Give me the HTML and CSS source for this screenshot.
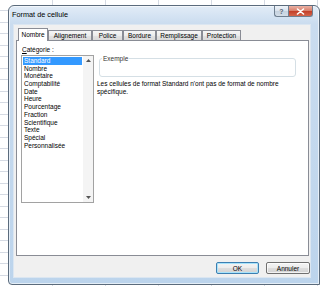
FILE: index.html
```html
<!DOCTYPE html>
<html lang="fr">
<head>
    <meta charset="UTF-8">
    <title>Format de cellule</title>
    <link rel="stylesheet" href="styles.css">
</head>
<body>
    <div class="window">
        <div class="titlebar">
            <span class="title">Format de cellule</span>
            <div class="caption">
                <span class="cap-btn help">?</span>
                <span class="cap-btn close">
                    <svg width="9" height="7" viewBox="0 0 9 7"><path d="M1.5 1 L7.5 6 M7.5 1 L1.5 6" stroke="#fff" stroke-width="1.6" stroke-linecap="round"/></svg>
                </span>
            </div>
        </div>

        <div class="client">
            <div class="tabs">
                <span class="tab active">Nombre</span>
                <span class="tab w-align">Alignement</span>
                <span class="tab w-police">Police</span>
                <span class="tab w-bordure">Bordure</span>
                <span class="tab w-rempl">Remplissage</span>
                <span class="tab w-prot">Protection</span>
            </div>

            <div class="panel">
                <div class="category">
                    <div class="label"><u>C</u>atégorie :</div>
                    <div class="listbox">
                        <ul class="items">
                            <li class="selected">Standard</li>
                            <li>Nombre</li>
                            <li>Monétaire</li>
                            <li>Comptabilité</li>
                            <li>Date</li>
                            <li>Heure</li>
                            <li>Pourcentage</li>
                            <li>Fraction</li>
                            <li>Scientifique</li>
                            <li>Texte</li>
                            <li>Spécial</li>
                            <li>Personnalisée</li>
                        </ul>
                        <div class="scrollbar">
                            <span class="arrow"><svg width="5" height="3" viewBox="0 0 5 3"><path d="M0 3 L2.5 0 L5 3 Z" fill="#555"/></svg></span>
                            <span class="arrow"><svg width="5" height="3" viewBox="0 0 5 3"><path d="M0 0 L2.5 3 L5 0 Z" fill="#555"/></svg></span>
                        </div>
                    </div>
                </div>

                <div class="details">
                    <fieldset class="sample">
                        <legend>Exemple</legend>
                        <div class="sample-value"></div>
                    </fieldset>
                    <p class="desc">Les cellules de format Standard n'ont pas de format de nombre spécifique.</p>
                </div>
            </div>

            <div class="buttons">
                <button class="btn default">OK</button>
                <button class="btn">Annuler</button>
            </div>
        </div>
    </div>
</body>
</html>
```

FILE: styles.css
```css
body {
    margin: 0;
    width: 320px;
    height: 286px;
    overflow: hidden;
    background-color: #fff;
    background-image:
        repeating-linear-gradient(to bottom, transparent 0 10.5px, #d5dae3 10.5px 11.5px),
        repeating-linear-gradient(to right, transparent 0 52px, #d5dae3 52px 53px);
    font-family: "Liberation Sans", Arial, sans-serif;
    font-size: 6.5px;
    color: #000;
}
.window {
    margin: 5px 0 0 8px;
    width: 312px;
    height: 280px;
    box-sizing: border-box;
    border: 1px solid #5b6b7c;
    border-radius: 6px 6px 0 4px;
    background: linear-gradient(to bottom, #e2ecf7 0, #cadcef 18px, #bcd4ec 100%);
    box-shadow: inset 0 0 0 1px rgba(255,255,255,0.6);
    padding: 0 6px 0 4px;
    display: flex;
    flex-direction: column;
}
.titlebar {
    height: 18px;
    display: flex;
    justify-content: space-between;
    align-items: flex-start;
}
.title {
    margin: 4px 0 0 -1px;
    font-size: 7.3px;
    line-height: 9px;
}
.caption {
    display: flex;
}
.cap-btn {
    height: 11px;
    box-sizing: border-box;
    border: 1px solid #6f7f90;
    border-top: none;
    display: flex;
    align-items: center;
    justify-content: center;
}
.help {
    width: 14px;
    border-right: none;
    border-radius: 0 0 0 3px;
    background: linear-gradient(to bottom, #eef3f9 0, #dbe4ee 45%, #c6d2df 55%, #d3dde8 100%);
    color: #5a6673;
    font-size: 7px;
    font-weight: bold;
}
.close {
    width: 25px;
    border-radius: 0 0 3px 0;
    background: linear-gradient(to bottom, #eab1a4 0, #d9816e 45%, #c4412a 55%, #d4654b 100%);
}
.client {
    width: 298px;
    height: 254px;
    box-sizing: border-box;
    border: 1px solid #dbe6f1;
    background: #f0f0f0;
    padding: 3px 0 0 2px;
}
.tabs {
    height: 12px;
    display: flex;
    align-items: flex-end;
    padding-left: 2px;
}
.tab {
    height: 10px;
    box-sizing: border-box;
    border: 1px solid #898c95;
    border-bottom: none;
    background: linear-gradient(to bottom, #f6f6f6 0, #ececec 50%, #e2e2e2 51%, #dadada 100%);
    text-align: center;
    line-height: 9px;
}
.tab.active {
    width: 30px;
    height: 13px;
    margin-bottom: -1px;
    background: #fff;
    line-height: 11px;
    position: relative;
    z-index: 1;
}
.w-align { width: 44px; }
.w-police { width: 31px; }
.w-bordure { width: 33px; }
.w-rempl { width: 46px; }
.w-prot { width: 39px; }
.panel {
    width: 293px;
    height: 216px;
    box-sizing: border-box;
    border: 1px solid #898c95;
    background: #fff;
    display: flex;
    gap: 3px;
    padding: 5px 0 0 4px;
}
.category {
    width: 73px;
}
.label {
    height: 8px;
    line-height: 8px;
    margin-left: 1px;
}
.listbox {
    margin-top: 1px;
    height: 148px;
    box-sizing: border-box;
    border: 1px solid #a2a2a2;
    display: flex;
}
.items {
    flex: 1;
    margin: 0;
    padding: 1px;
    list-style: none;
}
.items li {
    height: 7.7px;
    line-height: 7.7px;
    padding-left: 1px;
    white-space: nowrap;
}
.items li.selected {
    background: #3399ff;
    color: #fff;
}
.scrollbar {
    width: 10px;
    background: #f4f4f4;
    display: flex;
    flex-direction: column;
    justify-content: space-between;
}
.arrow {
    height: 9px;
    display: flex;
    align-items: center;
    justify-content: center;
}
.details {
    flex: 1;
    padding-top: 9px;
}
.sample {
    margin: 0 0 0 2px;
    width: 197px;
    box-sizing: border-box;
    padding: 0;
    border: 1px solid #d5dfe5;
    border-radius: 3px;
}
.sample legend {
    margin-left: 2px;
    padding: 0 1px;
    line-height: 7px;
    color: #333;
}
.sample-value {
    height: 14px;
}
.desc {
    margin: 3px 0 0 0;
    width: 200px;
    line-height: 8px;
}
.buttons {
    margin-top: 6px;
    display: flex;
    justify-content: flex-end;
    gap: 7px;
}
.btn {
    width: 44px;
    height: 12px;
    padding: 0;
    border: 1px solid #707070;
    border-radius: 2px;
    background: linear-gradient(to bottom, #f4f4f4 0, #ececec 50%, #dedede 51%, #d2d2d2 100%);
    box-shadow: inset 0 0 0 1px rgba(255,255,255,0.7);
    font-family: "Liberation Sans", Arial, sans-serif;
    font-size: 6.5px;
    color: #000;
}
.btn.default {
    width: 43px;
    border-color: #3c7fb1;
    box-shadow: inset 0 0 0 1px #a8e3fb;
}
```
